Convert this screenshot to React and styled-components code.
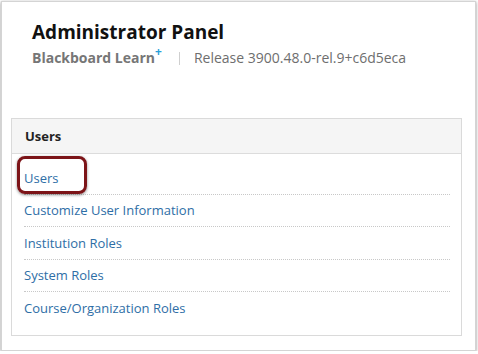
import React from 'react'
import styled, { createGlobalStyle } from 'styled-components'

const GlobalStyle = createGlobalStyle`
  html, body {
    margin: 0;
    padding: 0;
    background: #ffffff;
  }
  body {
    font-family: "Open Sans", "Liberation Sans", sans-serif;
  }
`

const links = [
  'Users',
  'Customize User Information',
  'Institution Roles',
  'System Roles',
  'Course/Organization Roles',
]

function App() {
  return (
    <>
      <GlobalStyle />
      <Frame>
        <PageHead>
          <Title>Administrator Panel</Title>
          <SubLine>
            <Brand>
              Blackboard Learn<Plus>+</Plus>
            </Brand>
            <Divider />
            <Release>Release 3900.48.0-rel.9+c6d5eca</Release>
          </SubLine>
        </PageHead>

        <Panel>
          <PanelHead>Users</PanelHead>
          <LinkList>
            {links.map((label, i) => (
              <LinkRow key={label} last={i === links.length - 1}>
                <LinkText href="#">{label}</LinkText>
                {i === 0 && <Callout />}
              </LinkRow>
            ))}
          </LinkList>
        </Panel>
      </Frame>
    </>
  )
}

export default App

const Frame = styled.div`
  box-sizing: border-box;
  margin: 1px 0 0 1px;
  width: 475px;
  height: 350px;
  background: #fff;
  border: 1px solid #d4d4d4;
  box-shadow: 0 1px 3px rgba(0, 0, 0, 0.45);
  padding: 10px 13px 0 9px;
`

const PageHead = styled.div`
  padding: 8px 0 0 21px;
  height: 106px;
  box-sizing: border-box;
`

const Title = styled.h1`
  margin: 0;
  font-size: 19px;
  line-height: 24px;
  font-weight: 700;
  color: #111;
`

const SubLine = styled.div`
  display: flex;
  align-items: center;
  margin-top: 5px;
  font-size: 14px;
  line-height: 18px;
  color: #6e6e6e;
`

const Brand = styled.span`
  font-weight: 700;
  color: #767676;
`

const Plus = styled.sup`
  color: #2aa0d8;
  font-size: 12px;
  font-weight: 700;
  vertical-align: 7px;
  line-height: 0;
  margin-left: 0;
`

const Divider = styled.span`
  width: 1px;
  height: 13px;
  background: #cfcfcf;
  margin: 0 14px 0 17px;
`

const Release = styled.span`
  color: #6e6e6e;
`

const Panel = styled.div`
  border: 1px solid #dadada;
  background: #fff;
  height: 218px;
  box-sizing: border-box;
`

const PanelHead = styled.div`
  height: 35px;
  box-sizing: border-box;
  padding: 0 13px;
  display: flex;
  align-items: center;
  background: #f5f5f5;
  border-bottom: 1px solid #dcdcdc;
  font-size: 13px;
  font-weight: 700;
  color: #222;
`

const LinkList = styled.ul`
  list-style: none;
  margin: 0;
  padding: 8px 11px 0 12px;
`

const LinkRow = styled.li`
  position: relative;
  height: 32.5px;
  display: flex;
  align-items: center;
  border-bottom: ${(p) => (p.last ? 'none' : '1px dotted #c8c8c8')};
  box-sizing: border-box;
`

const LinkText = styled.a`
  font-size: 13px;
  color: #2e6ea6;
  text-decoration: none;
`

const Callout = styled.span`
  position: absolute;
  left: -7px;
  top: -6px;
  width: 70px;
  height: 38px;
  box-sizing: border-box;
  border: 3px solid #7c1418;
  border-radius: 8px;
  box-shadow: 0 1px 3px rgba(0, 0, 0, 0.45);
  pointer-events: none;
`
